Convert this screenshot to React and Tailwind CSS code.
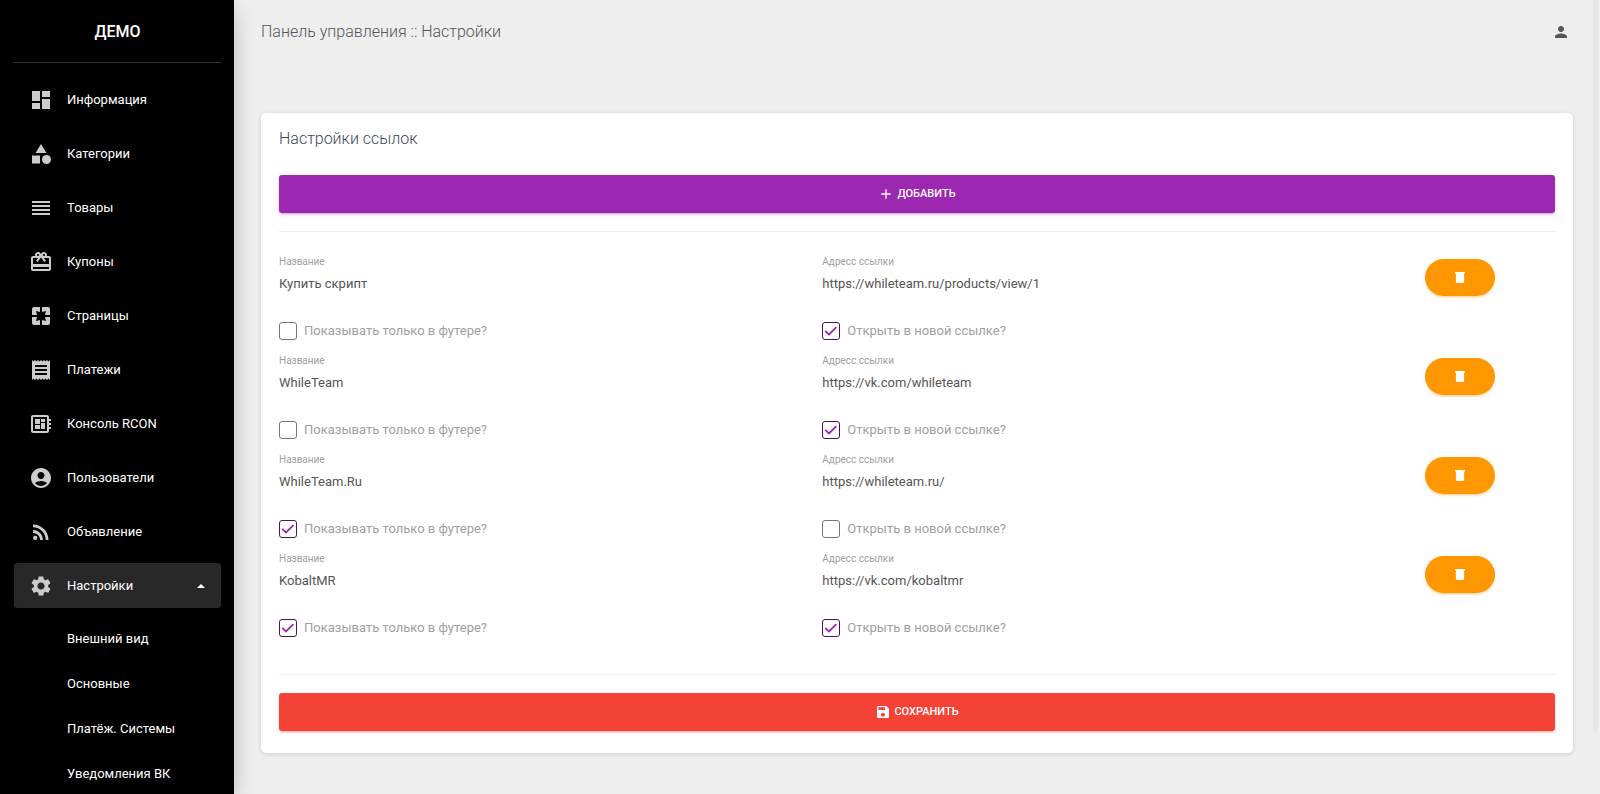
import { useState } from "react";
import {
  MdDashboard, MdCategory, MdReorder, MdCardGiftcard, MdPages, MdReceipt,
  MdDeveloperBoard, MdAccountCircle, MdRssFeed, MdSettings, MdPerson, MdAdd, MdSave,
} from "react-icons/md";

const NAV = [
  { label: "Информация", Icon: MdDashboard },
  { label: "Категории", Icon: MdCategory },
  { label: "Товары", Icon: MdReorder },
  { label: "Купоны", Icon: MdCardGiftcard },
  { label: "Страницы", Icon: MdPages },
  { label: "Платежи", Icon: MdReceipt },
  { label: "Консоль RCON", Icon: MdDeveloperBoard },
  { label: "Пользователи", Icon: MdAccountCircle },
  { label: "Объявление", Icon: MdRssFeed },
  { label: "Настройки", Icon: MdSettings, open: true },
];

const SUBNAV = ["Внешний вид", "Основные", "Платёж. Системы", "Уведомления ВК"];

const LINKS = [
  { id: 1, name: "Купить скрипт", url: "https://whileteam.ru/products/view/1", footer: false, blank: true },
  { id: 2, name: "WhileTeam", url: "https://vk.com/whileteam", footer: false, blank: true },
  { id: 3, name: "WhileTeam.Ru", url: "https://whileteam.ru/", footer: true, blank: false },
  { id: 4, name: "KobaltMR", url: "https://vk.com/kobaltmr", footer: true, blank: true },
];

function Sidebar() {
  return (
    <aside className="relative z-10 w-[234px] shrink-0 overflow-hidden bg-black pl-3.5 pr-[13px] text-white shadow-[0_8px_24px_-4px_rgba(0,0,0,0.2),0_4px_20px_0_rgba(0,0,0,0.08)]">
      <div className="flex h-[63px] items-center justify-center border-b border-white/20 pt-0.5">
        <a href="#" className="text-base font-medium">ДЕМО</a>
      </div>
      <nav className="mt-3.5">
        <ul className="flex flex-col gap-[9px]">
          {NAV.map(({ label, Icon, open }) => (
            <li key={label}>
              <a
                href="#"
                className={
                  open
                    ? "flex h-[45px] items-center rounded-[3px] bg-[#282828] pl-[15px] pr-4"
                    : "flex h-[45px] items-center rounded-[3px] pl-[15px] pr-4"
                }
              >
                <Icon className="size-6 shrink-0 text-[#cccccc]" aria-hidden="true" />
                <span className="ml-3.5 flex-1">{label}</span>
                {open && (
                  <svg viewBox="0 0 8 4" className="h-1 w-2 fill-white" aria-hidden="true">
                    <path d="M0 4 4 0l4 4z" />
                  </svg>
                )}
              </a>
            </li>
          ))}
        </ul>
        <ul className="mt-2">
          {SUBNAV.map((label) => (
            <li key={label}>
              <a href="#" className="flex h-[45px] items-center pl-[53px]">{label}</a>
            </li>
          ))}
        </ul>
      </nav>
    </aside>
  );
}

function Field({ id, label, value }) {
  return (
    <div className="flex flex-col">
      <label htmlFor={id} className="text-[10px] leading-[14px] text-[#a0a0a0]">{label}</label>
      <input id={id} defaultValue={value} className="h-7 w-full bg-transparent text-[13px] text-[#555555] outline-none" />
    </div>
  );
}

function Check({ label, initial }) {
  const [on, setOn] = useState(initial);
  return (
    <label className="mt-6 flex h-5 items-center gap-[7px] text-[13px] text-[#a0a0a0]">
      <span className="grid size-[18px] shrink-0">
        <input
          type="checkbox"
          checked={on}
          onChange={() => setOn(!on)}
          className="col-start-1 row-start-1 size-[18px] appearance-none rounded-[3px] border border-[#757575] bg-white checked:border-[#4a1259]"
        />
        {on && (
          <svg viewBox="0 0 18 18" className="pointer-events-none col-start-1 row-start-1 size-[18px] fill-none stroke-[#9c27b0]" aria-hidden="true">
            <path d="M3.2 8.8 7 12.4l7.4-7.2" strokeWidth="1.8" />
          </svg>
        )}
      </span>
      {label}
    </label>
  );
}

function TrashIcon() {
  return (
    <svg viewBox="0 0 10 11" className="h-[11px] w-2.5 fill-white" aria-hidden="true">
      <path d="M0 0h10v1.6H9.1V10a1 1 0 0 1-1 1H1.9a1 1 0 0 1-1-1V1.6H0z" />
    </svg>
  );
}

function LinkRow({ link }) {
  return (
    <div className="grid h-[99px] grid-cols-[5fr_5fr_2fr]">
      <div className="px-3.5">
        <Field id={`name-${link.id}`} label="Название" value={link.name} />
        <Check label="Показывать только в футере?" initial={link.footer} />
      </div>
      <div className="px-3.5">
        <Field id={`url-${link.id}`} label="Адресс ссылки" value={link.url} />
        <Check label="Открыть в новой ссылке?" initial={link.blank} />
      </div>
      <div className="flex items-start justify-center pt-1">
        <button
          type="button"
          aria-label="Удалить"
          className="flex h-[37px] w-[70px] items-center justify-center rounded-full bg-[#ff9800] shadow-[0_2px_2px_0_rgba(255,152,0,0.14),0_3px_1px_-2px_rgba(255,152,0,0.2),0_1px_5px_0_rgba(255,152,0,0.12)]"
        >
          <TrashIcon />
        </button>
      </div>
    </div>
  );
}

export default function App() {
  return (
    <div className="flex h-screen overflow-hidden bg-[#eeeeee] font-[Roboto,sans-serif] text-[13px] leading-5">
      <Sidebar />
      <main className="flex min-w-0 flex-1 flex-col pl-[27px] pr-5">
        <header className="flex h-[63px] items-center justify-between pr-[3px]">
          <h1 className="text-base font-light text-[#555555]">Панель управления :: Настройки</h1>
          <button type="button" aria-label="Профиль">
            <MdPerson className="size-[18px] text-[#555555]" />
          </button>
        </header>
        <section className="mt-[50px] rounded-[5px] bg-white px-[18px] pb-[22px] shadow-[0_1px_4px_0_rgba(0,0,0,0.14)]">
          <h2 className="pt-3.5 text-base font-light text-[#3c4858]">Настройки ссылок</h2>
          <button
            type="button"
            className="mt-6 flex h-[38px] w-full items-center justify-center gap-[3px] rounded-[3px] bg-[#9c27b0] text-[11px] font-medium text-white shadow-[0_2px_2px_0_rgba(156,39,176,0.14),0_3px_1px_-2px_rgba(156,39,176,0.2),0_1px_5px_0_rgba(156,39,176,0.12)]"
          >
            <MdAdd className="size-4" aria-hidden="true" />
            ДОБАВИТЬ
          </button>
          <hr className="mt-[18px] border-[#eeeeee]" />
          <div className="-mx-3.5 mt-[23px]">
            {LINKS.map((link) => <LinkRow key={link.id} link={link} />)}
          </div>
          <hr className="mt-[23px] border-[#eeeeee]" />
          <button
            type="button"
            className="mt-[18px] flex h-[38px] w-full items-center justify-center gap-[3px] rounded-[3px] bg-[#f44336] text-[11px] font-medium text-white shadow-[0_2px_2px_0_rgba(244,67,54,0.14),0_3px_1px_-2px_rgba(244,67,54,0.2),0_1px_5px_0_rgba(244,67,54,0.12)]"
          >
            <MdSave className="size-4" aria-hidden="true" />
            СОХРАНИТЬ
          </button>
        </section>
      </main>
      <div className="mr-0.5 h-[733px] w-[5px] shrink-0 rounded-b bg-[#e5e5e5]" />
    </div>
  );
}
